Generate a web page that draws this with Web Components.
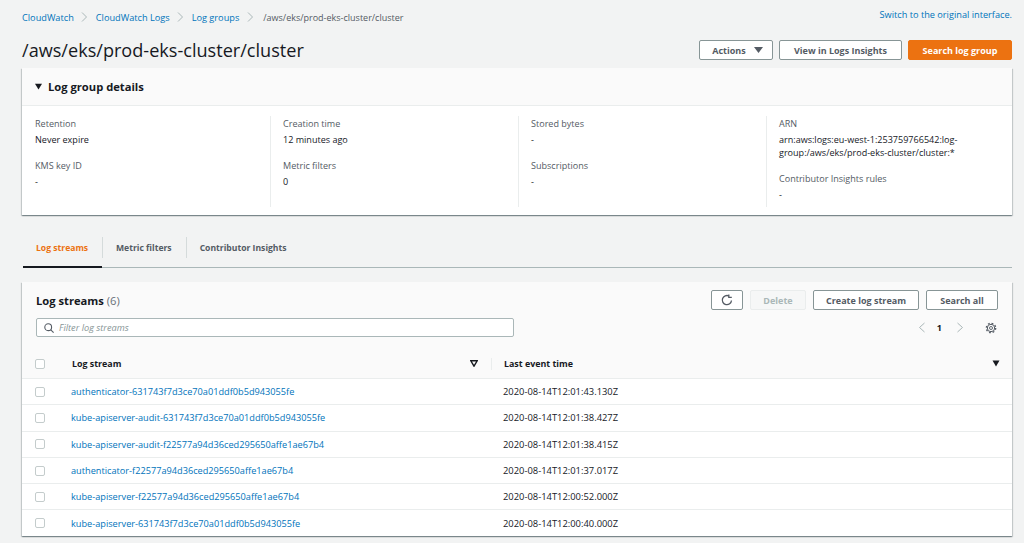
<!DOCTYPE html>
<html lang="en"><head><meta charset="utf-8"><title>Log group</title>
<style>
html,body{margin:0;padding:0}
body{background:#f2f3f3;width:1024px;height:543px;overflow:hidden;font-family:"Open Sans","Liberation Sans",sans-serif;font-size:9.2px;color:#16191f;-webkit-font-smoothing:antialiased}
app-page{display:block}
</style></head><body>
<template id="t-btn"><style>
:host{display:inline-flex;box-sizing:border-box;height:20px;align-items:center;justify-content:center;border:1px solid #879596;border-radius:2px;background:#fff;color:#545b64;font-weight:700;font-size:9px;white-space:nowrap;gap:9px}
:host([variant=primary]){background:#ec7211;border-color:#ec7211;color:#fff}
:host([variant=disabled]){background:#f6f7f7;border-color:#eaeded;color:#aab7b8}
</style><slot></slot></template>

<template id="t-crumbs"><style>
:host{display:flex;align-items:center;height:33px;justify-content:space-between;padding-top:1px;box-sizing:border-box}
nav{display:flex;align-items:center;font-size:9.2px;color:#545b64}
.r{color:#0073bb;font-size:9.2px;position:relative;top:-3px}
</style><nav><slot></slot></nav><span class="r"><slot name="right"></slot></span></template>

<template id="t-crumb"><style>
:host{display:inline-flex;align-items:center;color:#0073bb}
:host([current]){color:#545b64;font-size:9px}
svg{width:7px;height:10px;margin:0 7.500px;display:block}
:host([current]) svg{margin:0 9.500px 0 7.500px}
:host([first]) svg{display:none}
</style><svg viewBox="0 0 7 10" fill="none" stroke="#aab7b8" stroke-width="1"><path d="M1 .5 5.500 5 1 9.500"/></svg><slot></slot></template>

<template id="t-head"><style>
:host{display:flex;align-items:center;justify-content:space-between;height:35px;box-sizing:border-box;padding-bottom:1px}
h1{margin:0;font-size:18.100px;font-weight:400;color:#16191f;position:relative;top:-.5px}
div{display:flex;gap:6px}
</style><h1><slot name="title"></slot></h1><div><slot></slot></div></template>

<template id="t-card"><style>
:host{display:block;background:#fff;box-shadow:0 1px 1px 0 rgba(0,28,36,.3),1px 1px 1px 0 rgba(0,28,36,.15),-1px 1px 1px 0 rgba(0,28,36,.15)}
</style><slot></slot></template>

<template id="t-exp"><style>
:host{display:flex;align-items:center;height:38px;box-sizing:border-box;border-bottom:1px solid #eaeded;padding-left:13px;gap:6px;font-weight:700;font-size:11.200px;background:#fafafa}
svg{width:7px;height:7px}
</style><svg viewBox="0 0 7 7"><path d="M0 .8h7L3.500 6.400z" fill="#16191f"/></svg><slot></slot></template>

<template id="t-grid"><style>
:host{display:grid;grid-template-columns:repeat(4,248px);padding:10px 0 8px 0;height:109px;box-sizing:border-box;background:#fff}
</style><slot></slot></template>

<template id="t-col"><style>
:host{display:flex;flex-direction:column;gap:13px;padding:1px 8px 0 12px;border-left:1px solid #eaeded;box-sizing:border-box}
:host([first]){border-left:0;padding-left:13px}
</style><slot></slot></template>

<template id="t-kv"><style>
:host{display:block;line-height:13px;font-size:9.050px}
.k{color:#545b64;margin-bottom:3px;display:block}
.v{color:#16191f;display:block;overflow-wrap:anywhere}
</style><span class="k"><slot name="k"></slot></span><span class="v"><slot></slot></span></template>

<template id="t-tabs"><style>
:host{display:flex;height:35px;margin:18px 0 14px 1px;border-bottom:1px solid #aab7b8;box-sizing:border-box;align-items:flex-start}
</style><slot></slot></template>

<template id="t-tab"><style>
:host{display:flex;align-items:flex-start;padding:9px 14px 0;font-weight:700;font-size:8.600px;line-height:12px;color:#545b64;position:relative;box-sizing:border-box;height:35px;white-space:nowrap}
:host([active]){color:#ec7211;border-bottom:2px solid #16191f;padding-left:13px;padding-right:0;width:79px}
:host(:not(:first-child))::before{content:"";position:absolute;left:0;top:4px;height:21px;width:1px;background:#d5dbdb}
</style><slot></slot></template>

<template id="t-toolbar"><style>
:host{display:flex;align-items:center;justify-content:space-between;padding:8px 14px 0 14px;height:20px;background:#fafafa}
h2{margin:0;font-size:11.200px;font-weight:700;color:#16191f}
span{font-weight:400;color:#687078}
div{display:flex;gap:7px}
</style><h2><slot name="title"></slot> <span><slot name="count"></slot></span></h2><div><slot></slot></div></template>

<template id="t-filter"><style>
:host{display:flex;align-items:center;justify-content:space-between;padding:8px 14px 0 14px;height:19px;background:#fafafa}
.i{width:478px;height:19px;box-sizing:border-box;background:#fff;border:1px solid #aab7b8;border-radius:2px;display:flex;align-items:center;padding-left:7px;gap:5px;color:#879596;font-style:italic;font-size:9.200px}
.i svg{width:10px;height:10px;flex:none}
.p{display:flex;align-items:center;color:#16191f;font-weight:700;font-size:9px}
.p svg{display:block}
</style><div class="i"><svg viewBox="0 0 10 10" fill="none" stroke="#545b64" stroke-width="1.100"><circle cx="4.200" cy="4.200" r="3.400"/><path d="M6.800 6.800 9.600 9.600"/></svg><slot></slot></div>
<div class="p"><svg width="8" height="11" viewBox="0 0 8 11" fill="none" stroke="#aab7b8" stroke-width="1"><path d="M6.500 1 1.500 5.500l5 4.500"/></svg><span style="margin:0 14px 0 11px">1</span><svg width="8" height="11" viewBox="0 0 8 11" fill="none" stroke="#aab7b8" stroke-width="1"><path d="M1.500 1l5 4.500-5 4.500"/></svg>
<svg style="margin-left:21px;margin-right:1px" width="12" height="12" viewBox="0 0 12 12" fill="none" stroke="#545b64"><circle cx="6" cy="6" r="3.700" stroke-width="1"/><circle cx="6" cy="6" r="4.700" stroke-width="1.300" stroke-dasharray="1.800 1.890"/><circle cx="6" cy="6" r="1.500" stroke-width=".9"/></svg></div></template>

<template id="t-table"><style>
:host{display:block;padding-top:13px;background:#fafafa}
</style><slot></slot></template>

<template id="t-row"><style>
:host{display:grid;grid-template-columns:36px 432px 1fr;align-items:center;height:26.300px;box-sizing:border-box;border-top:1px solid #eaeded;padding-left:13px;color:#16191f;font-size:9.400px;background:#fff}
i{display:block;width:10px;height:10px;box-sizing:border-box;border:1px solid #c4cccc;border-radius:2px;background:#fff}
.l{color:#0073bb;font-size:9.200px}
</style><i></i><span class="l"><slot name="name"></slot></span><span class="t"><slot name="time"></slot></span></template>

<template id="t-headrow"><style>
:host{display:grid;grid-template-columns:37px 419px 1fr;align-items:center;height:28px;box-sizing:border-box;padding-left:13px;font-weight:700;font-size:8.900px;color:#16191f}
i{display:block;width:10px;height:10px;box-sizing:border-box;border:1px solid #c4cccc;border-radius:2px;background:#fff}
.c{display:flex;align-items:center;justify-content:space-between;height:12px;margin-top:-1px}
.a{padding-right:13px}
.b{border-left:1px solid #eaeded;padding-left:12px;padding-right:12px}
svg{width:8px;height:7px}
</style><i></i><div class="c a"><slot name="a"></slot><svg viewBox="0 0 8 7"><path d="M.8.8h6.400L4 6.200z" fill="none" stroke="#16191f" stroke-width="1.400"/></svg></div>
<div class="c b"><slot name="b"></slot><svg viewBox="0 0 8 7"><path d="M.5.500h7L4 6.500z" fill="#16191f"/></svg></div></template>

<script>
const reg=(n,t)=>customElements.define(n,class extends HTMLElement{constructor(){super();this.attachShadow({mode:'open'}).appendChild(document.getElementById(t).content.cloneNode(true))}});
[['aws-button','t-btn'],['aws-crumbs','t-crumbs'],['aws-crumb','t-crumb'],['aws-head','t-head'],['aws-card','t-card'],['aws-expander','t-exp'],['aws-grid','t-grid'],['aws-col','t-col'],['aws-kv','t-kv'],['aws-tabs','t-tabs'],['aws-tab','t-tab'],['aws-toolbar','t-toolbar'],['aws-filter','t-filter'],['aws-table','t-table'],['aws-row','t-row'],['aws-headrow','t-headrow']].forEach(a=>reg(a[0],a[1]));
customElements.define('app-page',class extends HTMLElement{constructor(){super();this.attachShadow({mode:'open'}).innerHTML='<style>:host{display:block;padding:0 12px 0 22px}</style><slot></slot>'}});
</script>

<app-page>
<aws-crumbs>
<aws-crumb first>CloudWatch</aws-crumb><aws-crumb>CloudWatch Logs</aws-crumb><aws-crumb>Log groups</aws-crumb><aws-crumb current>/aws/eks/prod-eks-cluster/cluster</aws-crumb>
<span slot="right">Switch to the original interface.</span>
</aws-crumbs>
<aws-head><span slot="title">/aws/eks/prod-eks-cluster/cluster</span>
<aws-button style="width:74px;padding-left:3px;gap:8px">Actions <svg width="9" height="6" viewBox="0 0 9 6"><path d="M0 0h9L4.500 6z" fill="#545b64"/></svg></aws-button><aws-button style="width:123px">View in Logs Insights</aws-button><aws-button style="width:104px" variant="primary">Search log group</aws-button></aws-head>
<aws-card>
<aws-expander>Log group details</aws-expander>
<aws-grid>
<aws-col first><aws-kv><span slot="k">Retention</span>Never expire</aws-kv><aws-kv><span slot="k">KMS key ID</span>-</aws-kv></aws-col>
<aws-col><aws-kv><span slot="k">Creation time</span>12 minutes ago</aws-kv><aws-kv><span slot="k">Metric filters</span>0</aws-kv></aws-col>
<aws-col><aws-kv><span slot="k">Stored bytes</span>-</aws-kv><aws-kv><span slot="k">Subscriptions</span>-</aws-kv></aws-col>
<aws-col><aws-kv><span slot="k">ARN</span>arn:aws:logs:eu-west-1:253759766542:log-group:/aws/eks/prod-eks-cluster/cluster:*</aws-kv><aws-kv><span slot="k">Contributor Insights rules</span>-</aws-kv></aws-col>
</aws-grid>
</aws-card>
<aws-tabs><aws-tab active>Log streams</aws-tab><aws-tab>Metric filters</aws-tab><aws-tab>Contributor Insights</aws-tab></aws-tabs>
<aws-card>
<aws-toolbar><span slot="title">Log streams</span><span slot="count">(6)</span>
<aws-button style="width:32px"><svg width="12" height="12" viewBox="0 0 12 12" fill="none" stroke="#545b64" stroke-width="1.300"><path d="M10.500 6.500A4.600 4.600 0 1 1 8 2"/><path d="M7.800.500V3.300h3"/></svg></aws-button><aws-button style="width:56px" variant="disabled">Delete</aws-button><aws-button style="width:106px">Create log stream</aws-button><aws-button style="width:72px">Search all</aws-button></aws-toolbar>
<aws-filter>Filter log streams</aws-filter>
<aws-table>
<aws-headrow><span slot="a">Log stream</span><span slot="b">Last event time</span></aws-headrow>
<aws-row><span slot="name">authenticator-631743f7d3ce70a01ddf0b5d943055fe</span><span slot="time">2020-08-14T12:01:43.130Z</span></aws-row>
<aws-row><span slot="name">kube-apiserver-audit-631743f7d3ce70a01ddf0b5d943055fe</span><span slot="time">2020-08-14T12:01:38.427Z</span></aws-row>
<aws-row><span slot="name">kube-apiserver-audit-f22577a94d36ced295650affe1ae67b4</span><span slot="time">2020-08-14T12:01:38.415Z</span></aws-row>
<aws-row><span slot="name">authenticator-f22577a94d36ced295650affe1ae67b4</span><span slot="time">2020-08-14T12:01:37.017Z</span></aws-row>
<aws-row><span slot="name">kube-apiserver-f22577a94d36ced295650affe1ae67b4</span><span slot="time">2020-08-14T12:00:52.000Z</span></aws-row>
<aws-row><span slot="name">kube-apiserver-631743f7d3ce70a01ddf0b5d943055fe</span><span slot="time">2020-08-14T12:00:40.000Z</span></aws-row>
</aws-table>
</aws-card>
</app-page>
</body></html>
